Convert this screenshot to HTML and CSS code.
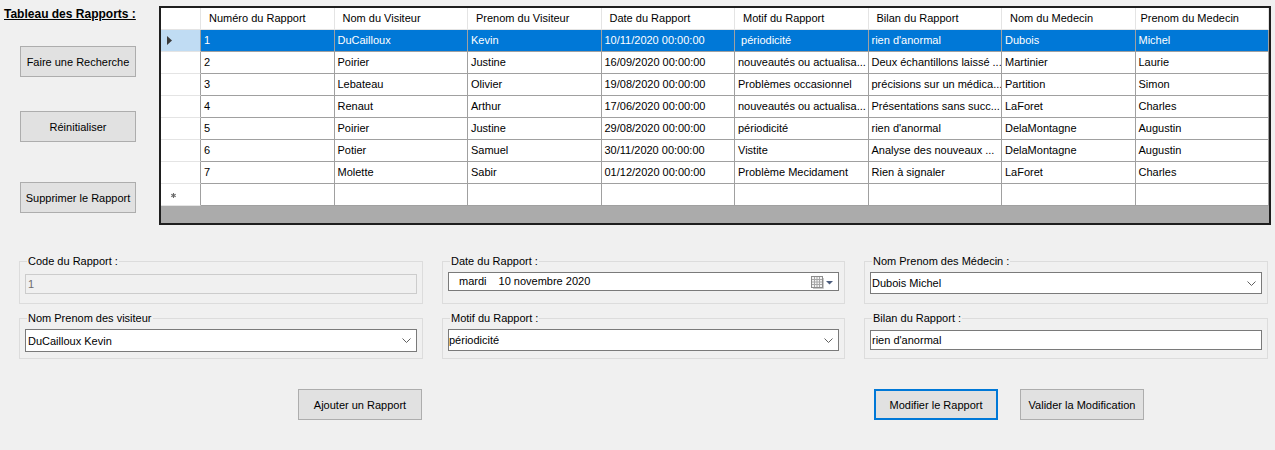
FILE: index.html
```html
<!DOCTYPE html>
<html lang="fr">
<head>
<meta charset="utf-8">
<title>Tableau des Rapports</title>
<link rel="stylesheet" href="styles.css">
</head>
<body>
<div class="app">
  <div class="top">
    <div class="side">
      <div class="title">Tableau des Rapports :</div>
      <button class="btn btn-side btn-search">Faire une Recherche</button>
      <button class="btn btn-side btn-reset">Réinitialiser</button>
      <button class="btn btn-side btn-delete">Supprimer le Rapport</button>
    </div>
    <div class="grid">
      <div class="row head">
        <div class="rh"></div>
        <div class="hc">Numéro du Rapport</div>
        <div class="hc">Nom du Visiteur</div>
        <div class="hc">Prenom du Visiteur</div>
        <div class="hc">Date du Rapport</div>
        <div class="hc">Motif du Rapport</div>
        <div class="hc">Bilan du Rapport</div>
        <div class="hc">Nom du Medecin</div>
        <div class="hc hc-last">Prenom du Medecin</div>
      </div>
      <div class="row sel">
        <div class="rh"><svg class="arrow" width="5" height="9" viewBox="0 0 5 9"><polygon points="0,0 5,4.5 0,9" fill="#3a3a3a"/></svg></div>
        <div class="c">1</div><div class="c">DuCailloux</div><div class="c">Kevin</div><div class="c">10/11/2020 00:00:00</div><div class="c">&nbsp;périodicité</div><div class="c">rien d'anormal</div><div class="c">Dubois</div><div class="c">Michel</div>
      </div>
      <div class="row">
        <div class="rh"></div>
        <div class="c">2</div><div class="c">Poirier</div><div class="c">Justine</div><div class="c">16/09/2020 00:00:00</div><div class="c">nouveautés ou actualisa...</div><div class="c">Deux échantillons laissé ...</div><div class="c">Martinier</div><div class="c">Laurie</div>
      </div>
      <div class="row">
        <div class="rh"></div>
        <div class="c">3</div><div class="c">Lebateau</div><div class="c">Olivier</div><div class="c">19/08/2020 00:00:00</div><div class="c">Problèmes occasionnel</div><div class="c">précisions sur un médica...</div><div class="c">Partition</div><div class="c">Simon</div>
      </div>
      <div class="row">
        <div class="rh"></div>
        <div class="c">4</div><div class="c">Renaut</div><div class="c">Arthur</div><div class="c">17/06/2020 00:00:00</div><div class="c">nouveautés ou actualisa...</div><div class="c">Présentations sans succ...</div><div class="c">LaForet</div><div class="c">Charles</div>
      </div>
      <div class="row">
        <div class="rh"></div>
        <div class="c">5</div><div class="c">Poirier</div><div class="c">Justine</div><div class="c">29/08/2020 00:00:00</div><div class="c">périodicité</div><div class="c">rien d'anormal</div><div class="c">DelaMontagne</div><div class="c">Augustin</div>
      </div>
      <div class="row">
        <div class="rh"></div>
        <div class="c">6</div><div class="c">Potier</div><div class="c">Samuel</div><div class="c">30/11/2020 00:00:00</div><div class="c">Vistite</div><div class="c">Analyse des nouveaux ...</div><div class="c">DelaMontagne</div><div class="c">Augustin</div>
      </div>
      <div class="row">
        <div class="rh"></div>
        <div class="c">7</div><div class="c">Molette</div><div class="c">Sabir</div><div class="c">01/12/2020 00:00:00</div><div class="c">Problème Mecidament</div><div class="c">Rien à signaler</div><div class="c">LaForet</div><div class="c">Charles</div>
      </div>
      <div class="row">
        <div class="rh"><svg class="star" width="5" height="5" viewBox="0 0 5 5"><g stroke="#6a6a6a" stroke-width="1.1"><line x1="2.5" y1="0" x2="2.5" y2="5"/><line x1="0.3" y1="1.2" x2="4.7" y2="3.8"/><line x1="0.3" y1="3.8" x2="4.7" y2="1.2"/></g></svg></div>
        <div class="c"></div><div class="c"></div><div class="c"></div><div class="c"></div><div class="c"></div><div class="c"></div><div class="c"></div><div class="c"></div>
      </div>
    </div>
  </div>

  <div class="form">
    <fieldset class="group g1">
      <legend>Code du Rapport :</legend>
      <div class="textbox disabled">1</div>
    </fieldset>
    <fieldset class="group g1">
      <legend>Date du Rapport :</legend>
      <div class="datepick">
        <span class="day">mardi</span><span class="date">10 novembre 2020</span>
        <svg class="cal" width="23" height="13" viewBox="0 0 23 13">
          <rect x="0.5" y="0.5" width="11" height="11" fill="#f4f4f4" stroke="#8c8c8c"/>
          <g stroke="#a8a8a8" stroke-width="1">
            <line x1="1" y1="3.5" x2="11" y2="3.5"/>
            <line x1="1" y1="6" x2="11" y2="6"/>
            <line x1="1" y1="8.5" x2="11" y2="8.5"/>
            <line x1="3.5" y1="1" x2="3.5" y2="11"/>
            <line x1="6" y1="1" x2="6" y2="11"/>
            <line x1="8.5" y1="1" x2="8.5" y2="11"/>
          </g>
          <line x1="2" y1="12.5" x2="12.5" y2="12.5" stroke="#c8c8c8"/>
          <line x1="12.5" y1="2" x2="12.5" y2="12.5" stroke="#c8c8c8"/>
          <polygon points="15,5 22,5 18.5,8.5" fill="#4c5c7c"/>
        </svg>
      </div>
    </fieldset>
    <fieldset class="group g1">
      <legend>Nom Prenom des Médecin :</legend>
      <div class="combo h22">
        <span>Dubois Michel</span>
        <svg class="chev" width="9" height="5" viewBox="0 0 9 5"><polyline points="0.5,0.5 4.5,4.5 8.5,0.5" fill="none" stroke="#606060" stroke-width="1"/></svg>
      </div>
    </fieldset>
    <fieldset class="group g2">
      <legend>Nom Prenom des visiteur</legend>
      <div class="combo h23">
        <span>DuCailloux Kevin</span>
        <svg class="chev" width="9" height="5" viewBox="0 0 9 5"><polyline points="0.5,0.5 4.5,4.5 8.5,0.5" fill="none" stroke="#606060" stroke-width="1"/></svg>
      </div>
    </fieldset>
    <fieldset class="group g2">
      <legend>Motif du Rapport :</legend>
      <div class="combo h22 tight">
        <span>périodicité</span>
        <svg class="chev" width="9" height="5" viewBox="0 0 9 5"><polyline points="0.5,0.5 4.5,4.5 8.5,0.5" fill="none" stroke="#606060" stroke-width="1"/></svg>
      </div>
    </fieldset>
    <fieldset class="group g2">
      <legend>Bilan du Rapport :</legend>
      <div class="textbox bilan">rien d'anormal</div>
    </fieldset>
  </div>

  <div class="actions">
    <button class="btn btn-act">Ajouter un Rapport</button>
    <button class="btn btn-act btn-focus btn-modif">Modifier le Rapport</button>
    <button class="btn btn-act btn-valid">Valider la Modification</button>
  </div>
</div>
</body>
</html>
```

FILE: styles.css
```css
html, body {
  margin: 0;
  padding: 0;
  background: #f0f0f0;
}
body {
  font-family: "Liberation Sans", Arial, sans-serif;
  font-size: 11px;
  color: #000;
  width: 1275px;
  height: 450px;
  overflow: hidden;
}
.app {
  display: flex;
  flex-direction: column;
}
.top {
  display: flex;
  align-items: flex-start;
}
.side {
  width: 155px;
  padding: 8px 0 0 4px;
  display: flex;
  flex-direction: column;
  align-items: flex-start;
}
.title {
  font-weight: bold;
  font-size: 12px;
  text-decoration: underline;
  line-height: 13px;
  white-space: nowrap;
}
.btn {
  font-family: "Liberation Sans", Arial, sans-serif;
  font-size: 11px;
  color: #000;
  background: #e1e1e1;
  border: 1px solid #adadad;
  padding: 0;
  margin: 0;
  box-sizing: border-box;
  height: 31px;
  white-space: nowrap;
}
.btn-side {
  width: 116px;
  margin-left: 16px;
}
.btn-search { margin-top: 25px; }
.btn-reset { margin-top: 34px; }
.btn-delete { margin-top: 40px; }

.grid {
  margin-top: 6px;
  width: 1112px;
  height: 219px;
  box-sizing: border-box;
  border: 2px solid #1e1e1e;
  background: #ababab;
  overflow: hidden;
}
.row {
  display: grid;
  grid-template-columns: 40px repeat(8, 1fr);
  height: 22px;
  background: #fff;
}
.row > div {
  box-sizing: border-box;
  white-space: nowrap;
  overflow: hidden;
}
.rh {
  border-right: 1px solid #a0a0a0;
  border-bottom: 1px solid #e4e4e4;
  background: #fff;
  display: flex;
  align-items: center;
}
.head .rh {
  border-right: 1px solid #e4e4e4;
}
.hc {
  border-right: 1px solid #e4e4e4;
  border-bottom: 1px solid #e4e4e4;
  padding-left: 8px;
  line-height: 21px;
}
.hc-last { padding-left: 5px; }
.c {
  border-right: 1px solid #a0a0a0;
  border-bottom: 1px solid #a0a0a0;
  padding-left: 3px;
  line-height: 20px;
}
.sel .c {
  background: #0078d7;
  color: #fff;
}
.sel .rh {
  background: #c0dcf3;
}
.arrow { margin-left: 6px; }
.star { margin-left: 10px; margin-top: 1px; }

.form {
  margin-top: 30px;
  padding-left: 19px;
  display: grid;
  grid-template-columns: 404px 403px 404px;
  grid-template-rows: 49px 47px;
  column-gap: 19px;
  row-gap: 8px;
}
.group {
  margin: 0;
  padding: 0 5px;
  border: 1px solid #dcdcdc;
  min-width: 0;
  box-sizing: border-box;
}
.group legend {
  padding: 0 1px;
  margin-left: 2px;
  line-height: 13px;
  font-size: 11px;
}
.g1 { height: 49px; }
.g2 { height: 47px; }

.textbox {
  box-sizing: border-box;
  height: 20px;
  border: 1px solid #7a7a7a;
  background: #fff;
  line-height: 18px;
  padding-left: 1px;
  white-space: nowrap;
}
.textbox.disabled {
  margin-top: 6px;
  background: #f0f0f0;
  border-color: #cccccc;
  color: #6d6d6d;
  padding-left: 2px;
}
.textbox.bilan {
  margin-top: 5px;
}
.datepick {
  margin-top: 4px;
  box-sizing: border-box;
  height: 19px;
  border: 1px solid #7a7a7a;
  background: #fff;
  display: flex;
  align-items: center;
  line-height: 17px;
  padding-left: 10px;
}
.datepick .date { margin-left: 12px; }
.datepick .cal { margin-left: auto; margin-right: 4px; margin-top: 1px; }
.combo {
  margin-top: 4px;
  box-sizing: border-box;
  border: 1px solid #7a7a7a;
  background: #fff;
  display: flex;
  align-items: center;
  padding-left: 1px;
  padding-right: 5px;
  white-space: nowrap;
}
.combo.h22 { height: 22px; }
.combo.h23 { height: 23px; padding-left: 2px; }
.combo.tight { padding-left: 0; }
.combo .chev { margin-left: auto; }

.actions {
  margin-top: 30px;
  padding-left: 298px;
  display: flex;
}
.btn-act { width: 124px; }
.btn-modif { margin-left: 452px; }
.btn-valid { margin-left: 22px; }
.btn-focus { border: 2px solid #0078d7; }
```
